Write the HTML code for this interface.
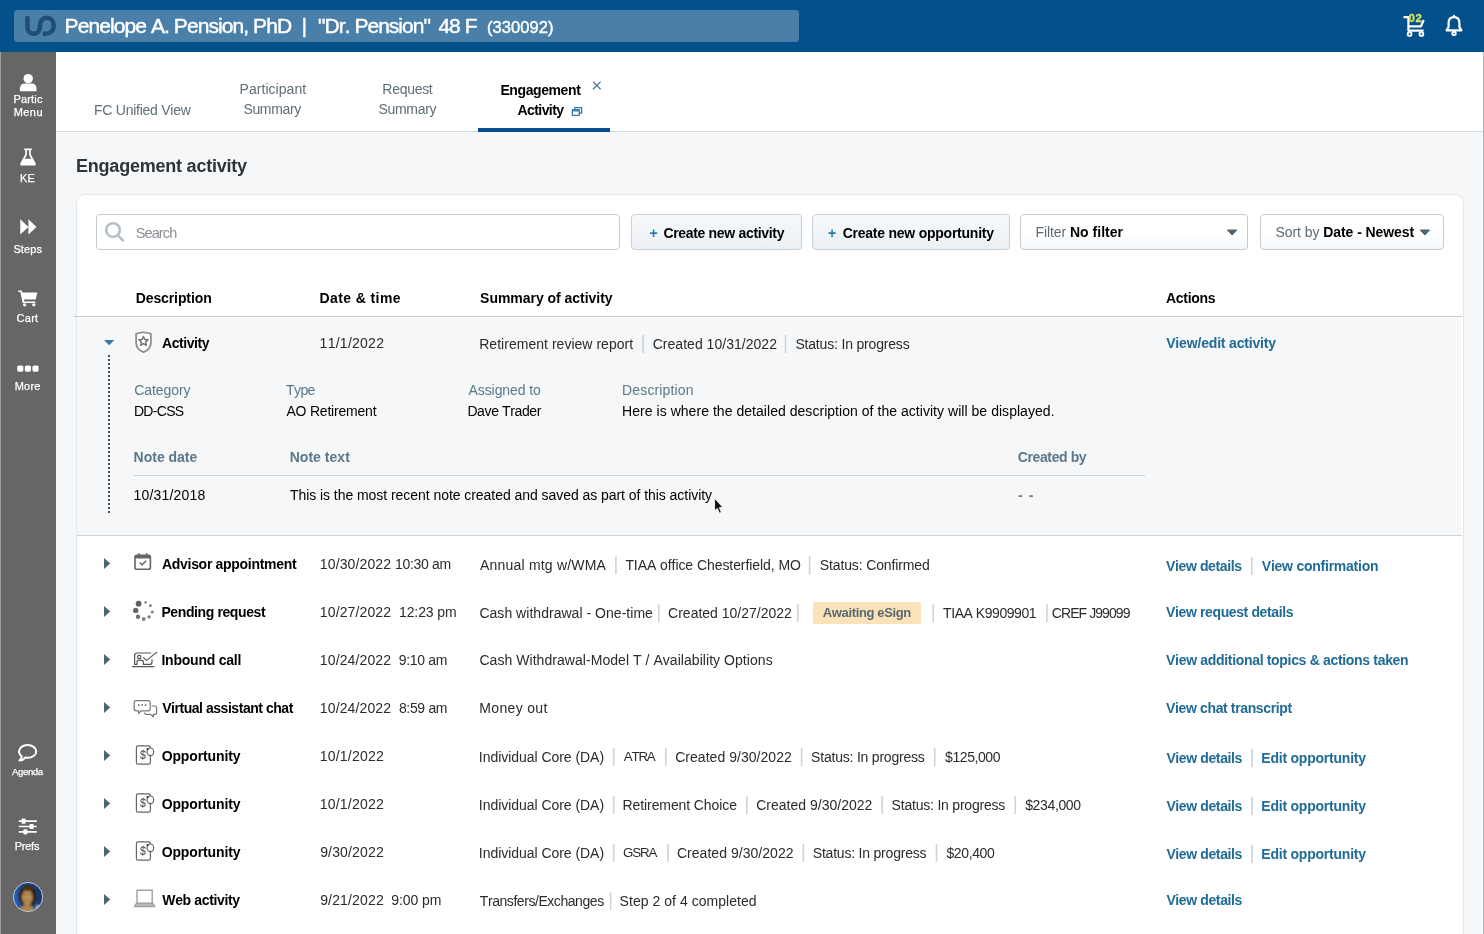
<!DOCTYPE html>
<html lang="en">
<head>
<meta charset="utf-8">
<title>Engagement activity</title>
<style>
html,body{margin:0;padding:0}
body{width:1484px;height:934px;overflow:hidden;position:relative;background:#f5f7f9;font-family:"Liberation Sans",sans-serif;color:#333}
#root{position:absolute;left:0;top:0;width:1484px;height:934px;will-change:transform}
.abs{position:absolute}
.t{position:absolute;white-space:pre;line-height:20px;height:20px;font-kerning:none}
#hdr{left:0;top:0;width:1484px;height:52px;background:#04508b}
#titlebar{left:14px;top:10px;width:785px;height:32px;background:#497fa8;border-radius:3.5px}
#side{left:0;top:52px;width:56px;height:882px;background:#666;box-sizing:border-box;border-left:1px solid #9e9e9e}
#tabs{left:56px;top:52px;width:1428px;height:79px;background:#fff;border-bottom:1px solid #d3d9de}
#tabline{left:478px;top:128px;width:132px;height:4px;background:#064e8c}
#card{left:76px;top:194px;width:1388px;height:760px;background:#fff;border:1px solid #e3e8ec;border-radius:9px;box-sizing:border-box}
#exp{left:77px;top:318px;width:1384px;height:217px;background:#f5f7f9}
#expline{left:77px;top:535px;width:1385px;height:1px;background:#ccd2d7}
#redge{left:1483px;top:52px;width:1px;height:882px;background:#b2b6b9}
#thline{left:74px;top:316px;width:1388px;height:1px;background:#c6ccd1}
#noteline{left:134px;top:475px;width:1011px;height:1px;background:#c9d1d7}
#dots{left:108px;top:355px;width:2px;height:158px;background:repeating-linear-gradient(to bottom,#3f4e59 0,#3f4e59 2px,transparent 2px,transparent 4px)}
.box{position:absolute;box-sizing:border-box;border:1px solid #c3ccd3;border-radius:4px;height:36px;top:214px;background:#fff}
.sel{background:linear-gradient(#fff 55%,#f4f7f9)}
.btn{background:linear-gradient(#f7f9fb,#ecf0f4);border-color:#c6d0d9}
.badge{position:absolute;left:813px;top:602px;width:108px;height:22px;background:#fbe2b8;border-radius:2px}
svg{position:absolute;overflow:visible}
</style>
</head>
<body>
<div id="root">
<div id="hdr" class="abs"></div>
<div id="titlebar" class="abs"></div>
<div id="tabs" class="abs"></div>
<div id="tabline" class="abs"></div>
<div id="side" class="abs"></div>
<div id="card" class="abs"></div>
<div id="thline" class="abs"></div>
<div id="exp" class="abs"></div>
<div id="expline" class="abs"></div>
<div id="redge" class="abs"></div>
<div id="noteline" class="abs"></div>
<div id="dots" class="abs"></div>
<div class="box" style="left:96px;width:524px"></div>
<div class="box btn" style="left:631px;width:171px"></div>
<div class="box btn" style="left:812px;width:198px"></div>
<div class="box sel" style="left:1020px;width:228px"></div>
<div class="box sel" style="left:1260px;width:184px"></div>
<div class="badge"></div>
<!-- logo -->
<svg width="40" height="26" style="left:20px;top:13px" viewBox="20 13 40 26"><path d="M27.4 16.2V27.1C27.4 31.4 30 33.7 33.5 33.7C37.7 33.7 39.9 30.4 40 26C40.1 20.4 42.9 17.8 46.6 17.8C50.9 17.8 53.7 21.1 53.7 25.7C53.7 30.7 50.2 33.7 45.2 33.7H42.8" fill="none" stroke="#224d76" stroke-width="4.5" stroke-linecap="butt"/></svg>
<!-- header cart + bell -->
<svg width="30" height="30" style="left:1400px;top:10px" viewBox="1400 10 30 30" fill="none" stroke="#fff" stroke-width="2.2" stroke-linecap="round" stroke-linejoin="round"><path d="M1404.4 17.2H1408.4V30.6H1422.8"/><path d="M1409 26.4H1421L1423.4 20.8"/><circle cx="1409.6" cy="34" r="1.9" stroke-width="1.9"/><circle cx="1421.4" cy="34" r="1.9" stroke-width="1.9"/></svg>
<svg width="24" height="26" style="left:1442px;top:12px" viewBox="1442 12 24 26" fill="none" stroke="#fff" stroke-width="2.2" stroke-linejoin="round"><path d="M1454 17.2C1450.4 17.2 1448.6 19.8 1448.6 23V27L1446.6 30.4H1461.4L1459.4 27V23C1459.4 19.8 1457.6 17.2 1454 17.2Z"/><circle cx="1454" cy="33.4" r="1.7" stroke-width="1.9"/><path d="M1454 15.9V17" stroke-linecap="round"/></svg>
<!-- tab close + restore -->
<svg width="12" height="12" style="left:591px;top:80px" viewBox="591 80 12 12" stroke="#41789f" stroke-width="1.3" fill="none"><path d="M593 81.6L600.6 89.2M600.6 81.6L593 89.2"/></svg>
<svg width="14" height="12" style="left:570px;top:105px" viewBox="570 105 14 12" stroke="#3b7bab" stroke-width="1.3" fill="none"><path d="M574.8 109.6V107.6H581.6V113H579.4"/><rect x="572.4" y="109.8" width="6.8" height="5.6" fill="#fff"/><path d="M572.4 110.6H579.2" stroke-width="1.8"/></svg>
<!-- sidebar icons -->
<svg width="56" height="882" style="left:0;top:52px" viewBox="0 52 56 882" fill="#fff">
<circle cx="28.2" cy="78.6" r="4.7"/><path d="M19.9 91.2V88.2C19.9 85 22 83.4 24.6 83.4H31.8C34.4 83.4 36.5 85 36.5 88.2V91.2Z"/>
<path d="M24.2 148.4H31.8V150H30.8V154.6L35.6 163.2C36.2 164.4 35.6 165.6 34.2 165.6H21.8C20.4 165.6 19.8 164.4 20.4 163.2L25.2 154.6V150H24.2Z"/><path d="M26.9 150.2H29.1V155.1L31.2 158.8H24.8L26.9 155.1Z" fill="#666"/>
<path d="M20.3 219.2L28.4 226.9L20.3 234.6ZM28.4 219.2L36.5 226.9L28.4 234.6Z"/>
<path d="M18.2 290.4H21.6L22.4 292.6H37.4L35.6 299.6H24L24.4 301.4H35.4V303H22.6L20.4 292H18.2Z"/><circle cx="24.6" cy="304.8" r="1.6"/><circle cx="33.8" cy="304.8" r="1.6"/>
<rect x="17.2" y="365.5" width="6.2" height="6.2" rx="1.6"/><rect x="24.8" y="365.5" width="6.2" height="6.2" rx="1.6"/><rect x="32.4" y="365.5" width="6.2" height="6.2" rx="1.6"/>
<path d="M27.6 745C22.9 745 19 747.8 19 751.4C19 753.3 20.1 755 21.8 756.2C21.6 757.6 20.8 759.2 19.4 760.6C21.8 760.4 23.9 759.4 25.2 757.6C26 757.7 26.8 757.8 27.6 757.8C32.3 757.8 36.2 755 36.2 751.4C36.2 747.8 32.3 745 27.6 745Z" fill="none" stroke="#fff" stroke-width="2" stroke-linejoin="round"/>
<path d="M18.8 821.2H36.8M18.8 826.5H36.8M18.8 831.8H36.8" stroke="#fff" stroke-width="1.7" fill="none"/><rect x="21.6" y="818.6" width="4" height="5.2" rx="0.8"/><rect x="29.6" y="823.9" width="4" height="5.2" rx="0.8"/><rect x="23.4" y="829.2" width="4" height="5.2" rx="0.8"/>
</svg>
<!-- avatar -->
<svg width="34" height="34" style="left:11px;top:880px" viewBox="11 880 34 34">
<defs><clipPath id="avc"><circle cx="28" cy="897" r="14.4"/></clipPath><linearGradient id="avg" x1="0" x2="1" y1="0" y2="0"><stop offset="0" stop-color="#2560b8"/><stop offset="0.55" stop-color="#1e4c98"/><stop offset="1" stop-color="#172c58"/></linearGradient><filter id="avb" x="-20%" y="-20%" width="140%" height="140%"><feGaussianBlur stdDeviation="1"/></filter></defs>
<g clip-path="url(#avc)"><rect x="11" y="880" width="34" height="34" fill="url(#avg)"/>
<g filter="url(#avb)"><ellipse cx="27.6" cy="896" rx="8.8" ry="11.6" fill="#2c1f10"/><ellipse cx="27" cy="912.5" rx="8.5" ry="7.5" fill="#ab864f"/><rect x="24" y="900" width="6.6" height="8" fill="#a8804a"/><ellipse cx="27.3" cy="897" rx="5.5" ry="7.2" fill="#b8905a"/><ellipse cx="27.6" cy="888.6" rx="5.6" ry="2.6" fill="#4a3416"/><circle cx="38.4" cy="907.8" r="2.6" fill="#ead6c2"/><path d="M23.5 899.5Q27.3 903 31 899.5" stroke="#8a6038" stroke-width="1" fill="none"/><path d="M23.6 894.2h2.6M28.6 894.2h2.6" stroke="#5a3c1c" stroke-width="1.1"/></g></g>
<circle cx="28" cy="897" r="14.6" fill="none" stroke="#c4d0e6" stroke-width="0.9"/>
</svg>
<!-- search icon -->
<svg width="24" height="24" style="left:101.6px;top:218.8px" viewBox="102 220 24 24" fill="none" stroke="#b4bfc7" stroke-width="2.6" stroke-linecap="round"><circle cx="113" cy="231" r="6.8"/><path d="M118.2 236.6L122.8 241.4"/></svg>
<!-- dropdown carets -->
<svg width="12" height="8" style="left:1226px;top:228px" viewBox="1226 228 12 8"><path d="M1227.4 230H1236.8L1232.1 235Z" fill="#4e6472" stroke="#4e6472" stroke-width="1" stroke-linejoin="round"/></svg>
<svg width="12" height="8" style="left:1419px;top:228px" viewBox="1419 228 12 8"><path d="M1420.2 230H1429.6L1424.9 235Z" fill="#4e6472" stroke="#4e6472" stroke-width="1" stroke-linejoin="round"/></svg>
<!-- row carets -->
<svg width="1484" height="934" style="left:0;top:0" viewBox="0 0 1484 934">
<path d="M104 340H114.3L109.15 345.2Z" fill="#3b78a8"/>
<g fill="#4a6472"><path d="M104 558L110.2 563.5L104 569Z"/><path d="M104 606L110.2 611.5L104 617Z"/><path d="M104 654L110.2 659.5L104 665Z"/><path d="M104 702L110.2 707.5L104 713Z"/><path d="M104 750L110.2 755.5L104 761Z"/><path d="M104 798L110.2 803.5L104 809Z"/><path d="M104 846L110.2 851.5L104 857Z"/><path d="M104 894L110.2 899.5L104 905Z"/></g>
<!-- shield -->
<path d="M136.1 333.9Q143.5 330.9 150.9 333.9V342.4C150.9 347.2 147.6 350.4 143.5 352.1C139.4 350.4 136.1 347.2 136.1 342.4Z" fill="#fff" stroke="#8a8a8a" stroke-width="1.7" stroke-linejoin="round"/>
<path d="M143.5 336.4L144.8 339.5L148.2 339.8L145.6 342L146.4 345.3L143.5 343.5L140.6 345.3L141.4 342L138.8 339.8L142.2 339.5Z" fill="none" stroke="#6f6f6f" stroke-width="1.4" stroke-linejoin="round"/>
<!-- calendar -->
<g fill="none" stroke="#666" stroke-width="1.6"><rect x="135" y="555.4" width="15.4" height="13.8" rx="1.8"/><path d="M135 557.2H150.4" stroke-width="2.6"/><path d="M138.8 553.2V556M146.6 553.2V556" stroke-width="1.8"/><path d="M139.8 562.6L142.2 564.8L146.2 560.8" stroke-width="1.5"/></g>
<!-- spinner -->
<g fill="#7c7c7c"><circle cx="138.6" cy="603.7" r="2.9" fill="#606060"/><circle cx="135.7" cy="610.4" r="2.7" fill="#666"/><circle cx="138" cy="616.7" r="2.2" fill="#6e6e6e"/><circle cx="143.7" cy="619" r="1.9"/><circle cx="149.1" cy="616.9" r="1.7"/><circle cx="152.3" cy="612" r="1.5"/><circle cx="150.4" cy="605.7" r="1.4"/><circle cx="145.5" cy="602.4" r="1.2"/></g>
<!-- inbound call -->
<g fill="none" stroke="#555" stroke-width="1.2" stroke-linecap="round" stroke-linejoin="round"><path d="M150.6 653H137.4C135.8 653 134.6 654 134.6 655.6V664.4H137V662.4C137 661 137.8 660.2 139.2 660.2H141.2C142.6 660.2 143.4 661 143.4 662.4V664.4H149.8C151.2 664.4 152 663.6 152 662.2V659.8"/><circle cx="139.2" cy="657" r="1.7"/><path d="M143.6 657.6L146.6 660.4L156.6 652.4"/><path d="M132.4 666.6H154"/></g>
<!-- chat -->
<g fill="none" stroke="#777" stroke-width="1.2" stroke-linejoin="round"><path d="M136.2 700.6H148.2C149.4 700.6 150.2 701.4 150.2 702.6V708.8C150.2 710 149.4 710.8 148.2 710.8H141.4L138.6 713.4V710.8H136.2C135 710.8 134.2 710 134.2 708.8V702.6C134.2 701.4 135 700.6 136.2 700.6Z"/><path d="M151.8 706H154.6C155.8 706 156.6 706.8 156.6 708V712.4C156.6 713.6 155.8 714.4 154.6 714.4H153.4V717L150.6 714.4H146.4C145.2 714.4 144.4 713.6 144.4 712.6"/></g>
<g fill="#777"><circle cx="138.8" cy="705" r="0.9"/><circle cx="142.2" cy="705" r="0.9"/><circle cx="145.6" cy="705" r="0.9"/></g>
<!-- opportunity x3 -->
<g id="opp" fill="none" stroke="#666" stroke-width="1.2"><path d="M150.4 755.4V762.6C150.4 763.6 149.8 764.2 148.8 764.2H138C137 764.2 136.4 763.6 136.4 762.6V747.4C136.4 746.4 137 745.8 138 745.8H148.8C149.8 745.8 150.4 746.4 150.4 747.4V748.2"/><ellipse cx="150.4" cy="751.8" rx="3.3" ry="3.8"/><circle cx="147.6" cy="749.2" r="1.15" fill="#444" stroke="none"/></g>
<use href="#opp" y="48"/><use href="#opp" y="96"/>
<!-- laptop -->
<g fill="none" stroke="#a0a0a0" stroke-width="1.4" stroke-linejoin="round"><path d="M137 903V890.2H152.2V903"/><path d="M136.6 903.2H152.6L154.8 906.6H134.4Z" fill="#b8b8b8"/></g>
<!-- cursor -->
<path d="M714.6 498.2V510.8L717.4 508.4L719.4 513.2L721.4 512.4L719.4 507.6H723Z" fill="#111" stroke="#fff" stroke-width="0.9" stroke-linejoin="round"/>
</svg>
<div class="t" style="left:139.9px;top:745.4px;font-size:12.5px;color:#444;transform:scaleX(0.86) skewX(-3deg);transform-origin:0 50%">$</div>
<div class="t" style="left:139.9px;top:793.4px;font-size:12.5px;color:#444;transform:scaleX(0.86) skewX(-3deg);transform-origin:0 50%">$</div>
<div class="t" style="left:139.9px;top:841.4px;font-size:12.5px;color:#444;transform:scaleX(0.86) skewX(-3deg);transform-origin:0 50%">$</div>

<svg width="1484" height="934" style="left:0;top:0" viewBox="0 0 1484 934" fill="#ccd3d9">
<rect x="615.1" y="556.4" width="1.6" height="18"/>
<rect x="808.8" y="556.4" width="1.6" height="18"/>
<rect x="657.9" y="604.0" width="1.6" height="18"/>
<rect x="797.0" y="604.0" width="1.6" height="18"/>
<rect x="932.5" y="604.0" width="1.6" height="18"/>
<rect x="1046.1" y="604.0" width="1.6" height="18"/>
<rect x="612.9" y="748.0" width="1.6" height="18"/>
<rect x="665.0" y="748.0" width="1.6" height="18"/>
<rect x="800.8" y="748.0" width="1.6" height="18"/>
<rect x="933.9" y="748.0" width="1.6" height="18"/>
<rect x="612.9" y="796.0" width="1.6" height="18"/>
<rect x="746.0" y="796.0" width="1.6" height="18"/>
<rect x="881.4" y="796.0" width="1.6" height="18"/>
<rect x="1014.5" y="796.0" width="1.6" height="18"/>
<rect x="612.9" y="844.0" width="1.6" height="18"/>
<rect x="667.2" y="844.0" width="1.6" height="18"/>
<rect x="802.5" y="844.0" width="1.6" height="18"/>
<rect x="935.7" y="844.0" width="1.6" height="18"/>
<rect x="609.8" y="892.0" width="1.6" height="18"/>
<rect x="642.2" y="335.0" width="1.6" height="18"/>
<rect x="784.7" y="335.0" width="1.6" height="18"/>
<rect x="1250.9" y="557.0" width="1.6" height="18"/>
<rect x="1251.1" y="749.0" width="1.6" height="18"/>
<rect x="1251.1" y="797.0" width="1.6" height="18"/>
<rect x="1251.1" y="845.0" width="1.6" height="18"/>
</svg>
<div class="t" style="left:64.6px;top:15.8px;font-size:21px;color:#fff;letter-spacing:-0.92px;-webkit-text-stroke:0.45px #fff;">Penelope A. Pension, PhD</div>
<div class="t" style="left:301.7px;top:15.6px;font-size:20px;color:#fff;-webkit-text-stroke:0.45px #fff;">|</div>
<div class="t" style="left:318.1px;top:15.8px;font-size:21px;color:#fff;letter-spacing:-0.99px;-webkit-text-stroke:0.45px #fff;">"Dr. Pension"</div>
<div class="t" style="left:438.5px;top:15.8px;font-size:21px;color:#fff;letter-spacing:-1.30px;-webkit-text-stroke:0.45px #fff;">48</div>
<div class="t" style="left:464.8px;top:15.8px;font-size:21px;color:#fff;-webkit-text-stroke:0.45px #fff;">F</div>
<div class="t" style="left:487.0px;top:17.4px;font-size:16.5px;color:#fff;letter-spacing:0.07px;-webkit-text-stroke:0.45px #fff;">(330092)</div>
<div class="t" style="left:1408.5px;top:8.4px;font-size:11.5px;color:#d8e45e;font-weight:700;letter-spacing:0.72px;-webkit-text-stroke:0.3px #d8e45e;">02</div>
<div class="t" style="left:94.0px;top:99.7px;font-size:14px;color:#5f6e77;letter-spacing:-0.25px;">FC Unified View</div>
<div class="t" style="left:239.6px;top:79.1px;font-size:14px;color:#5f6e77;letter-spacing:0.04px;">Participant</div>
<div class="t" style="left:243.4px;top:99.4px;font-size:14px;color:#5f6e77;letter-spacing:-0.32px;">Summary</div>
<div class="t" style="left:382.3px;top:79.1px;font-size:14px;color:#5f6e77;letter-spacing:-0.28px;">Request</div>
<div class="t" style="left:378.4px;top:99.4px;font-size:14px;color:#5f6e77;letter-spacing:-0.29px;">Summary</div>
<div class="t" style="left:500.4px;top:80.2px;font-size:14px;color:#000;font-weight:700;letter-spacing:-0.40px;">Engagement</div>
<div class="t" style="left:517.5px;top:100.2px;font-size:14px;color:#000;font-weight:700;letter-spacing:-0.58px;">Activity</div>
<div class="t" style="left:13.4px;top:89.0px;font-size:11px;color:#fff;letter-spacing:0.19px;-webkit-text-stroke:0.25px #fff;">Partic</div>
<div class="t" style="left:13.7px;top:102.3px;font-size:11px;color:#fff;letter-spacing:0.44px;-webkit-text-stroke:0.25px #fff;">Menu</div>
<div class="t" style="left:19.9px;top:168.3px;font-size:11px;color:#fff;letter-spacing:0.20px;-webkit-text-stroke:0.25px #fff;">KE</div>
<div class="t" style="left:13.4px;top:238.9px;font-size:11px;color:#fff;letter-spacing:0.12px;-webkit-text-stroke:0.25px #fff;">Steps</div>
<div class="t" style="left:16.5px;top:308.3px;font-size:11px;color:#fff;letter-spacing:0.29px;-webkit-text-stroke:0.25px #fff;">Cart</div>
<div class="t" style="left:14.7px;top:376.2px;font-size:11px;color:#fff;letter-spacing:0.24px;-webkit-text-stroke:0.25px #fff;">More</div>
<div class="t" style="left:12.0px;top:761.5px;font-size:9.5px;color:#fff;letter-spacing:-0.33px;-webkit-text-stroke:0.25px #fff;">Agenda</div>
<div class="t" style="left:14.7px;top:836.2px;font-size:11px;color:#fff;letter-spacing:-0.24px;-webkit-text-stroke:0.25px #fff;">Prefs</div>
<div class="t" style="left:76.0px;top:155.5px;font-size:18px;color:#2d3338;font-weight:700;letter-spacing:-0.22px;">Engagement activity</div>
<div class="t" style="left:135.8px;top:222.5px;font-size:14.5px;color:#8a8f94;letter-spacing:-0.91px;">Search</div>
<div class="t" style="left:649.4px;top:223.4px;font-size:14px;color:#2a7aa8;font-weight:700;">+</div>
<div class="t" style="left:663.4px;top:223.4px;font-size:14px;color:#000;font-weight:700;letter-spacing:-0.32px;">Create new activity</div>
<div class="t" style="left:827.9px;top:223.4px;font-size:14px;color:#2a7aa8;font-weight:700;">+</div>
<div class="t" style="left:842.7px;top:223.4px;font-size:14px;color:#000;font-weight:700;letter-spacing:-0.24px;">Create new opportunity</div>
<div class="t" style="left:1035.4px;top:221.7px;font-size:14px;color:#5c6b75;letter-spacing:-0.05px;">Filter</div>
<div class="t" style="left:1069.9px;top:221.7px;font-size:14px;color:#000;font-weight:700;letter-spacing:0.03px;">No filter</div>
<div class="t" style="left:1275.4px;top:221.7px;font-size:14px;color:#5c6b75;letter-spacing:-0.05px;">Sort by</div>
<div class="t" style="left:1323.3px;top:221.7px;font-size:14px;color:#000;font-weight:700;letter-spacing:-0.08px;">Date - Newest</div>
<div class="t" style="left:135.7px;top:288.0px;font-size:14px;color:#000;font-weight:700;letter-spacing:-0.10px;">Description</div>
<div class="t" style="left:319.6px;top:288.0px;font-size:14px;color:#000;font-weight:700;letter-spacing:0.39px;">Date &amp; time</div>
<div class="t" style="left:480.1px;top:288.0px;font-size:14px;color:#000;font-weight:700;letter-spacing:-0.03px;">Summary of activity</div>
<div class="t" style="left:1166.0px;top:288.0px;font-size:14px;color:#000;font-weight:700;letter-spacing:-0.29px;">Actions</div>
<div class="t" style="left:162.0px;top:333.0px;font-size:14px;color:#000;font-weight:700;letter-spacing:-0.44px;">Activity</div>
<div class="t" style="left:319.6px;top:333.0px;font-size:14px;color:#2b2b2b;letter-spacing:0.26px;">11/1/2022</div>
<div class="t" style="left:479.2px;top:333.9px;font-size:14px;color:#2b2b2b;letter-spacing:0.03px;">Retirement review report</div>
<div class="t" style="left:652.7px;top:333.9px;font-size:14px;color:#2b2b2b;letter-spacing:0.03px;">Created 10/31/2022</div>
<div class="t" style="left:795.4px;top:333.9px;font-size:14px;color:#2b2b2b;letter-spacing:-0.18px;">Status: In progress</div>
<div class="t" style="left:1166.2px;top:333.0px;font-size:14px;color:#216b97;font-weight:700;letter-spacing:-0.17px;">View/edit activity</div>
<div class="t" style="left:134.3px;top:380.3px;font-size:14px;color:#5c7888;letter-spacing:-0.07px;">Category</div>
<div class="t" style="left:286.1px;top:380.3px;font-size:14px;color:#5c7888;letter-spacing:-0.63px;">Type</div>
<div class="t" style="left:468.5px;top:380.3px;font-size:14px;color:#5c7888;letter-spacing:-0.08px;">Assigned to</div>
<div class="t" style="left:622.1px;top:380.3px;font-size:14px;color:#5c7888;letter-spacing:0.13px;">Description</div>
<div class="t" style="left:133.9px;top:401.1px;font-size:14px;color:#000;letter-spacing:-0.68px;">DD-CSS</div>
<div class="t" style="left:286.4px;top:401.1px;font-size:14px;color:#000;letter-spacing:-0.20px;">AO Retirement</div>
<div class="t" style="left:467.4px;top:401.1px;font-size:14px;color:#000;letter-spacing:-0.38px;">Dave Trader</div>
<div class="t" style="left:622.1px;top:401.1px;font-size:14px;color:#000;letter-spacing:0.04px;">Here is where the detailed description of the activity will be displayed.</div>
<div class="t" style="left:133.6px;top:447.1px;font-size:14px;color:#5c7888;font-weight:700;letter-spacing:-0.01px;">Note date</div>
<div class="t" style="left:289.7px;top:447.1px;font-size:14px;color:#5c7888;font-weight:700;letter-spacing:0.03px;">Note text</div>
<div class="t" style="left:1017.8px;top:447.1px;font-size:14px;color:#5c7888;font-weight:700;letter-spacing:-0.39px;">Created by</div>
<div class="t" style="left:133.4px;top:485.1px;font-size:14px;color:#000;letter-spacing:0.21px;">10/31/2018</div>
<div class="t" style="left:289.9px;top:485.1px;font-size:14px;color:#000;letter-spacing:-0.05px;">This is the most recent note created and saved as part of this activity</div>
<div class="t" style="left:1017.9px;top:485.1px;font-size:14px;color:#7a7a7a;font-weight:700;letter-spacing:1.10px;">- -</div>
<div class="t" style="left:162.0px;top:554.0px;font-size:14px;color:#000;font-weight:700;letter-spacing:-0.30px;">Advisor appointment</div>
<div class="t" style="left:319.8px;top:554.0px;font-size:14px;color:#2b2b2b;letter-spacing:0.13px;">10/30/2022</div>
<div class="t" style="left:395.0px;top:554.0px;font-size:14px;color:#2b2b2b;letter-spacing:-0.31px;">10:30 am</div>
<div class="t" style="left:161.4px;top:602.0px;font-size:14px;color:#000;font-weight:700;letter-spacing:-0.39px;">Pending request</div>
<div class="t" style="left:319.8px;top:602.0px;font-size:14px;color:#2b2b2b;letter-spacing:0.13px;">10/27/2022</div>
<div class="t" style="left:399.0px;top:602.0px;font-size:14px;color:#2b2b2b;letter-spacing:-0.11px;">12:23 pm</div>
<div class="t" style="left:161.4px;top:650.0px;font-size:14px;color:#000;font-weight:700;letter-spacing:-0.22px;">Inbound call</div>
<div class="t" style="left:319.8px;top:650.0px;font-size:14px;color:#2b2b2b;letter-spacing:0.13px;">10/24/2022</div>
<div class="t" style="left:398.8px;top:650.0px;font-size:14px;color:#2b2b2b;letter-spacing:-0.32px;">9:10 am</div>
<div class="t" style="left:162.2px;top:698.0px;font-size:14px;color:#000;font-weight:700;letter-spacing:-0.46px;">Virtual assistant chat</div>
<div class="t" style="left:319.8px;top:698.0px;font-size:14px;color:#2b2b2b;letter-spacing:0.13px;">10/24/2022</div>
<div class="t" style="left:398.9px;top:698.0px;font-size:14px;color:#2b2b2b;letter-spacing:-0.33px;">8:59 am</div>
<div class="t" style="left:161.7px;top:746.0px;font-size:14px;color:#000;font-weight:700;letter-spacing:-0.13px;">Opportunity</div>
<div class="t" style="left:319.8px;top:746.0px;font-size:14px;color:#2b2b2b;letter-spacing:0.20px;">10/1/2022</div>
<div class="t" style="left:161.7px;top:794.0px;font-size:14px;color:#000;font-weight:700;letter-spacing:-0.13px;">Opportunity</div>
<div class="t" style="left:319.8px;top:794.0px;font-size:14px;color:#2b2b2b;letter-spacing:0.20px;">10/1/2022</div>
<div class="t" style="left:161.7px;top:842.0px;font-size:14px;color:#000;font-weight:700;letter-spacing:-0.13px;">Opportunity</div>
<div class="t" style="left:320.2px;top:842.0px;font-size:14px;color:#2b2b2b;letter-spacing:0.15px;">9/30/2022</div>
<div class="t" style="left:162.3px;top:890.0px;font-size:14px;color:#000;font-weight:700;letter-spacing:-0.35px;">Web activity</div>
<div class="t" style="left:320.2px;top:890.0px;font-size:14px;color:#2b2b2b;letter-spacing:0.15px;">9/21/2022</div>
<div class="t" style="left:391.3px;top:890.0px;font-size:14px;color:#2b2b2b;letter-spacing:-0.07px;">9:00 pm</div>
<div class="t" style="left:480.1px;top:554.9px;font-size:14px;color:#2b2b2b;letter-spacing:0.19px;">Annual mtg w/WMA</div>
<div class="t" style="left:625.4px;top:554.9px;font-size:14px;color:#2b2b2b;letter-spacing:-0.07px;">TIAA office Chesterfield, MO</div>
<div class="t" style="left:819.8px;top:554.9px;font-size:14px;color:#2b2b2b;letter-spacing:-0.13px;">Status: Confirmed</div>
<div class="t" style="left:479.4px;top:602.9px;font-size:14px;color:#2b2b2b;letter-spacing:0.03px;">Cash withdrawal - One-time</div>
<div class="t" style="left:668.1px;top:602.9px;font-size:14px;color:#2b2b2b;">Created 10/27/2022</div>
<div class="t" style="left:822.8px;top:603.1px;font-size:13px;color:#5a6a73;font-weight:700;letter-spacing:-0.36px;">Awaiting eSign</div>
<div class="t" style="left:943.1px;top:602.9px;font-size:14px;color:#2b2b2b;letter-spacing:-0.45px;">TIAA K9909901</div>
<div class="t" style="left:1051.8px;top:602.9px;font-size:14px;color:#2b2b2b;letter-spacing:-0.93px;">CREF J99099</div>
<div class="t" style="left:479.4px;top:650.0px;font-size:14px;color:#2b2b2b;letter-spacing:0.05px;">Cash Withdrawal-Model T / Availability Options</div>
<div class="t" style="left:479.3px;top:698.0px;font-size:14px;color:#2b2b2b;letter-spacing:0.33px;">Money out</div>
<div class="t" style="left:478.8px;top:747.0px;font-size:14px;color:#2b2b2b;letter-spacing:-0.04px;">Individual Core (DA)</div>
<div class="t" style="left:623.7px;top:747.3px;font-size:13.3px;color:#2b2b2b;letter-spacing:-1.14px;">ATRA</div>
<div class="t" style="left:675.2px;top:747.0px;font-size:14px;color:#2b2b2b;letter-spacing:0.04px;">Created 9/30/2022</div>
<div class="t" style="left:811.1px;top:747.0px;font-size:14px;color:#2b2b2b;letter-spacing:-0.21px;">Status: In progress</div>
<div class="t" style="left:945.1px;top:747.0px;font-size:14px;color:#2b2b2b;letter-spacing:-0.43px;">$125,000</div>
<div class="t" style="left:478.8px;top:795.0px;font-size:14px;color:#2b2b2b;letter-spacing:-0.04px;">Individual Core (DA)</div>
<div class="t" style="left:622.6px;top:795.0px;font-size:14px;color:#2b2b2b;letter-spacing:-0.10px;">Retirement Choice</div>
<div class="t" style="left:756.2px;top:795.0px;font-size:14px;color:#2b2b2b;letter-spacing:0.01px;">Created 9/30/2022</div>
<div class="t" style="left:891.6px;top:795.0px;font-size:14px;color:#2b2b2b;letter-spacing:-0.21px;">Status: In progress</div>
<div class="t" style="left:1025.2px;top:795.0px;font-size:14px;color:#2b2b2b;letter-spacing:-0.36px;">$234,000</div>
<div class="t" style="left:478.8px;top:843.0px;font-size:14px;color:#2b2b2b;letter-spacing:-0.04px;">Individual Core (DA)</div>
<div class="t" style="left:623.0px;top:843.3px;font-size:13.3px;color:#2b2b2b;letter-spacing:-1.07px;">GSRA</div>
<div class="t" style="left:676.9px;top:843.0px;font-size:14px;color:#2b2b2b;letter-spacing:0.04px;">Created 9/30/2022</div>
<div class="t" style="left:812.8px;top:843.0px;font-size:14px;color:#2b2b2b;letter-spacing:-0.21px;">Status: In progress</div>
<div class="t" style="left:946.4px;top:843.0px;font-size:14px;color:#2b2b2b;letter-spacing:-0.37px;">$20,400</div>
<div class="t" style="left:479.8px;top:891.0px;font-size:14px;color:#2b2b2b;letter-spacing:-0.44px;">Transfers/Exchanges</div>
<div class="t" style="left:619.6px;top:891.0px;font-size:14px;color:#2b2b2b;letter-spacing:0.04px;">Step 2 of 4 completed</div>
<div class="t" style="left:1166.1px;top:555.7px;font-size:14px;color:#216b97;font-weight:700;letter-spacing:-0.39px;">View details</div>
<div class="t" style="left:1261.8px;top:555.7px;font-size:14px;color:#216b97;font-weight:700;letter-spacing:-0.24px;">View confirmation</div>
<div class="t" style="left:1166.1px;top:602.3px;font-size:14px;color:#216b97;font-weight:700;letter-spacing:-0.38px;">View request details</div>
<div class="t" style="left:1166.1px;top:650.0px;font-size:14px;color:#216b97;font-weight:700;letter-spacing:-0.32px;">View additional topics &amp; actions taken</div>
<div class="t" style="left:1166.1px;top:698.0px;font-size:14px;color:#216b97;font-weight:700;letter-spacing:-0.37px;">View chat transcript</div>
<div class="t" style="left:1166.4px;top:747.9px;font-size:14px;color:#216b97;font-weight:700;letter-spacing:-0.38px;">View details</div>
<div class="t" style="left:1261.3px;top:747.9px;font-size:14px;color:#216b97;font-weight:700;letter-spacing:-0.22px;">Edit opportunity</div>
<div class="t" style="left:1166.4px;top:795.9px;font-size:14px;color:#216b97;font-weight:700;letter-spacing:-0.38px;">View details</div>
<div class="t" style="left:1261.3px;top:795.9px;font-size:14px;color:#216b97;font-weight:700;letter-spacing:-0.22px;">Edit opportunity</div>
<div class="t" style="left:1166.4px;top:843.9px;font-size:14px;color:#216b97;font-weight:700;letter-spacing:-0.38px;">View details</div>
<div class="t" style="left:1261.3px;top:843.9px;font-size:14px;color:#216b97;font-weight:700;letter-spacing:-0.22px;">Edit opportunity</div>
<div class="t" style="left:1166.4px;top:889.9px;font-size:14px;color:#216b97;font-weight:700;letter-spacing:-0.38px;">View details</div>
</div>
</body>
</html>
